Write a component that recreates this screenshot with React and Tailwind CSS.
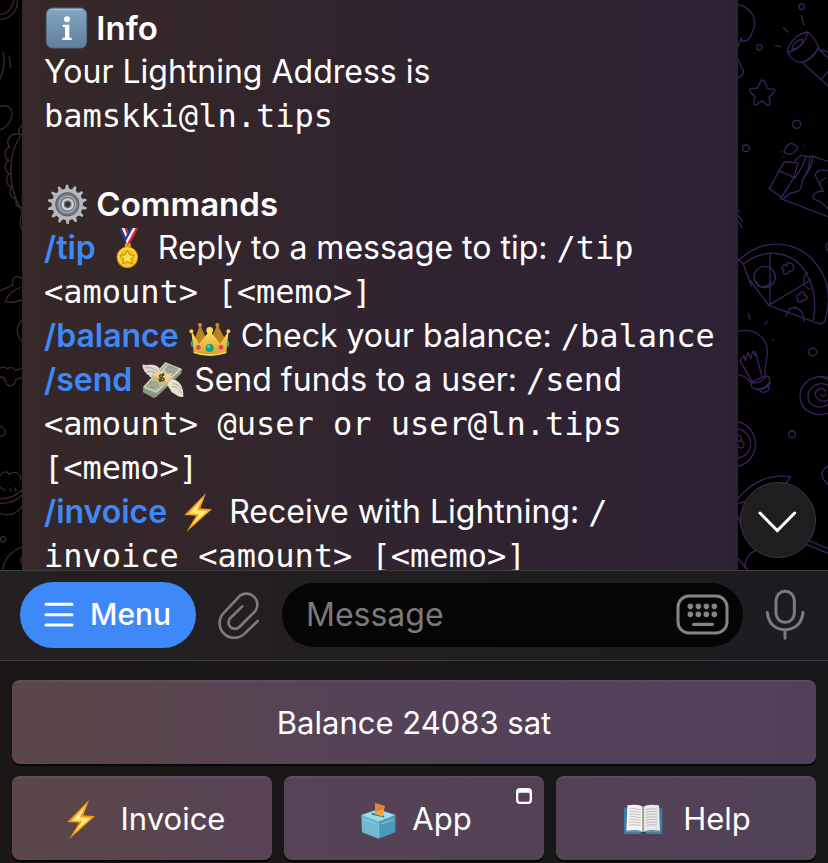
import React from 'react';

function Emoji({ label, children }) {
  return (
    <svg role="img" aria-label={label} viewBox="0 0 132 132" className="inline-block size-11 shrink-0 align-top">
      {children}
    </svg>
  );
}

function InfoEmoji() {
  return (
    <Emoji label="info">
      <defs>
        <linearGradient id="infoFill" x1="0" y1="0" x2="0" y2="1">
          <stop offset="0" stopColor="#84a7c3" />
          <stop offset="1" stopColor="#5f7f9d" />
        </linearGradient>
      </defs>
      <rect x="7" y="6" width="121" height="120" rx="19" fill="url(#infoFill)" stroke="#52708d" strokeWidth="3" />
      <path d="M24 11h88" stroke="#a9c6dc" strokeWidth="3" strokeLinecap="round" />
      <circle cx="69" cy="40" r="9" fill="#fff" />
      <path d="M56 56h20v39h7v7H55v-7h8V63h-7z" fill="#fff" />
    </Emoji>
  );
}

function GearEmoji() {
  const teeth = Array.from({ length: 14 }, (_, i) => (i * 360) / 14);
  return (
    <Emoji label="gear">
      {teeth.map((a) => (
        <path key={a} d="M63 22l3-14h6l4 14z" transform={`rotate(${a} 70 67)`} fill="#b6babf" />
      ))}
      <circle cx="70" cy="67" r="47" fill="#b4b8bd" />
      <circle cx="70" cy="67" r="35" fill="#737980" stroke="#53585e" strokeWidth="3" />
      <circle cx="70" cy="67" r="25" fill="none" stroke="#a6abb1" strokeWidth="4" />
      <circle cx="71" cy="67" r="15" fill="#5a6066" stroke="#cfd3d7" strokeWidth="7" />
      <circle cx="71" cy="67" r="7" fill="#33302f" />
    </Emoji>
  );
}

function MedalEmoji() {
  return (
    <Emoji label="medal">
      <path d="M42 6h14l18 44-8 12z" fill="#233a8f" />
      <path d="M50 6h12l14 36-4 14z" fill="#f3f4f8" />
      <path d="M58 6h8l12 32-3 9z" fill="#d8262f" />
      <path d="M100 6H86L62 52l8 10z" fill="#d8262f" />
      <path d="M92 6H80L62 42l4 12z" fill="#f3f4f8" />
      <path d="M84 6h-9L62 34l1 10z" fill="#233a8f" />
      <path d="M61 52h15l3 12H58z" fill="#d99b16" />
      <circle cx="67" cy="94" r="32" fill="#d89c12" />
      <circle cx="67" cy="93" r="29" fill="#fbd838" />
      <circle cx="67" cy="94" r="23" fill="#efbd20" />
      <path d="M67 73l7 14 15 1-11 11 4 15-15-8-14 8 3-15-11-11 15-1z" fill="#fbe04c" stroke="#c78a0c" strokeWidth="3" />
    </Emoji>
  );
}

function CrownEmoji() {
  return (
    <Emoji label="crown">
      <defs>
        <linearGradient id="crownFill" x1="0" y1="0" x2="0" y2="1">
          <stop offset="0" stopColor="#ffe066" />
          <stop offset="1" stopColor="#dc9c1d" />
        </linearGradient>
      </defs>
      <path d="M20 76L36 32l20 44 10 6 22-50 24 44v22H20z" fill="#b98320" />
      <circle cx="36" cy="33" r="6" fill="#c8952c" />
      <circle cx="88" cy="33" r="6" fill="#c8952c" />
      <path d="M10 50l23 39 32-39 32 39 25-39-7 67q-50 17-98 0z" fill="url(#crownFill)" />
      <circle cx="10" cy="52" r="6" fill="#f7cf52" />
      <circle cx="65" cy="49" r="10" fill="#ffd75a" />
      <circle cx="121" cy="52" r="6" fill="#f7cf52" />
      <path d="M17 115q48 16 98 0" fill="none" stroke="#f9d968" strokeWidth="4" />
      <ellipse cx="12" cy="89" rx="4" ry="9" fill="#22a88b" />
      <ellipse cx="120" cy="89" rx="4" ry="9" fill="#22a88b" />
      <circle cx="31" cy="100" r="7" fill="#d93d8f" />
      <circle cx="65" cy="102" r="12" fill="#1b9f83" />
      <circle cx="99" cy="100" r="7" fill="#d93d8f" />
      <circle cx="62" cy="98" r="4" fill="#6fdcc2" />
    </Emoji>
  );
}

function MoneyEmoji() {
  return (
    <Emoji label="money with wings">
      <path d="M5 19c10 6 26-3 42 5 12 6 16 18 12 26-8 12-20 14-29 8-4 0-6-4-6-7-5 0-8-3-8-7-5-1-7-5-7-8-4-4-5-10-4-17z" fill="#ddd9d0" />
      <path d="M12 29q20-4 36 10M18 40q14-2 27 6" fill="none" stroke="#a9a399" strokeWidth="3" />
      <path d="M73 13l50 20-3 14-74 70-8 3-33-18 2-12z" fill="#8e9784" />
      <path d="M73 13l50 20-76 72L5 88z" fill="#c9cfba" />
      <path d="M75 20l36 14-66 62-29-11z" fill="none" stroke="#87917b" strokeWidth="3" />
      <ellipse cx="88" cy="35" rx="14" ry="9" fill="#a2ac95" stroke="#758169" strokeWidth="2" />
      <ellipse cx="39" cy="80" rx="14" ry="9" fill="#a2ac95" stroke="#758169" strokeWidth="2" />
      <path d="M51 36l43 19v16L79 85 35 66V51z" fill="#d8b570" />
      <path d="M51 36l43 19-15 16-44-20z" fill="#efd296" />
      <path d="M70 52c-8-5-18 0-13 5s15 2 12 8-13 3-16-3M68 45L56 72" fill="none" stroke="#3d3523" strokeWidth="4" />
      <path d="M127 117c-12 1-20-4-26-10-8-1-12-8-14-14-7-6-8-18-2-25 10-7 21-3 28 5 10 8 15 25 14 44z" fill="#e5e1d8" />
      <path d="M93 85q17 0 29 22M96 77q17 1 27 18" fill="none" stroke="#aaa499" strokeWidth="3" />
    </Emoji>
  );
}

function BoltEmoji() {
  return (
    <Emoji label="high voltage">
      <path d="M90 9L25 75l35 2-29 49 77-68-35-3z" fill="#f59a1b" />
      <path d="M82 22L38 71l31 2-23 35 50-46-33-2z" fill="#ffe45c" />
      <path d="M72 38L50 66l27 1-16 22 24-23-27-1z" fill="#fff7b8" />
    </Emoji>
  );
}

function BallotEmoji() {
  return (
    <Emoji label="ballot box">
      <path d="M16 54l52 20v51L18 106z" fill="#6fb9d3" />
      <path d="M119 54L68 74v51l50-19z" fill="#4a99b8" />
      <path d="M16 54l50-17 53 17-51 20z" fill="#9bdcec" />
      <path d="M24 67l36 14M112 67L76 81M68 78v42" fill="none" stroke="#8dd0e4" strokeWidth="3" />
      <path d="M47 50l38 9" stroke="#2e6c86" strokeWidth="5" />
      <path d="M58 19l28 8-5 32-25-8z" fill="#f0a24a" />
      <path d="M58 19l28 8-2 9-27 8z" fill="#dc8630" />
    </Emoji>
  );
}

function BookEmoji() {
  const rows = [38, 46, 54, 62, 70, 78, 86];
  return (
    <Emoji label="open book">
      <path d="M9 32h115v79H75q-9 5-17 0H9z" fill="#3c7ca6" />
      <path d="M17 101h43l7 5 6-5h43v5H74l-7 4-7-4H17z" fill="#8b8a88" />
      <path d="M19 25q34-5 47 5v74q-14-8-50-3z" fill="#f4f3f1" />
      <path d="M114 25q-34-5-47 5v74q14-8 50-3z" fill="#e9e8e6" />
      <path d="M66 29v74" stroke="#8d8b89" strokeWidth="4" />
      {rows.map((y) => (
        <path key={y} d={`M25 ${y - 2}q17-3 34 2M75 ${y}q17-5 33-2`} fill="none" stroke="#a5a2ae" strokeWidth="2" />
      ))}
      <path d="M60 108h14" stroke="#264c35" strokeWidth="6" />
    </Emoji>
  );
}

function DoodlesLeft() {
  return (
    <svg
      aria-hidden="true"
      viewBox="0 0 66 1710"
      className="absolute top-0 left-0 h-[570px] w-[22px]"
      fill="none"
      stroke="#3d2926"
      strokeWidth="4"
      strokeLinecap="round"
    >
      <path d="M52 0C55 30 32 58 0 58M42 0C38 22 22 42 0 44" />
      <path d="M9 158q10 38-9 78M27 168l5 34" />
      <path d="M0 320c28-10 42 10 34 34-6 18-18 30-34 36" />
      <path d="M66 402c-44 58-46 154 0 232M66 378q-14 8-7 25c-30-6-44 20-30 38-18 6-18 32-3 40-16 10-12 34 2 40-14 12-8 36 6 40-8 18 0 34 14 36-2 20 6 26 18 24M66 640q-10 28 0 50" />
      <path d="M66 836c-18-14-32-2-28 20L0 872M62 862c-20 6-42 26-44 42 12 6 30 2 48-4" />
      <path d="M66 960q-28 30 0 66" />
      <path d="M0 1104q14-6 20 2 18-8 26 4l20-4M0 1132q10-4 16 10c4 22 28 20 32-4l18-5" />
      <path d="M0 1278c12 6 20 18 14 24q-6 8-14 6" />
      <path d="M0 1428c8-16 22-16 28-4 12-14 36-4 34 14M0 1462l6 4M12 1466l2 6M30 1466l2 8M46 1464l2 10M0 1496q40 0 66-26M0 1510q38 2 66-24M0 1540q40 14 66-20" />
      <circle cx="9" cy="1618" r="8" />
      <path d="M8 1710c4-32 26-60 58-68M66 1672q-8 8 0 20" />
    </svg>
  );
}

function DoodlesRight() {
  return (
    <svg
      aria-hidden="true"
      viewBox="0 0 270 1710"
      className="absolute top-0 right-0 h-[570px] w-[90px]"
      fill="none"
      stroke="#37235a"
      strokeWidth="4"
      strokeLinecap="round"
      strokeLinejoin="round"
    >
      {/* balloon and star */}
      <path d="M0 14c32 6 52 30 50 62-2 14-10 22-12 34q-8 14-26 14l-2-10-10 24M0 178l17 38q-5 14-17 16" />
      <path d="M73 240q6 0 8 8l8 18 20 2q4 6-2 10l-14 14 4 20q-4 6-10 2l-16-12-16 12q-8 2-8-6l4-18-14-14q-4-8 4-10l18-2 8-18q2-6 6-6z" />
      {/* flashlight */}
      <path d="M190 47l8 28M136 84l14 12M112 137l16 3" />
      <path d="M148 156c4-28 28-54 60-60 18 12 28 30 34 46-12 28-28 42-54 46-18-4-32-16-40-32zM148 156c30-4 56-26 60-60M162 148c2-16 16-30 32-30 2 14-14 30-32 30M242 142q-24 40-54 46M194 188l76 70M242 146l28 28M244 152q12-4 26 6M270 214l-20 24" />
      <circle cx="191" cy="20" r="8" />
      <circle cx="64" cy="142" r="8" />
      <circle cx="176" cy="373" r="12" />
      <circle cx="24" cy="445" r="10" />
      {/* candy bar */}
      <path d="M138 454q4-18 20-24 14 2 22 12-8 18-22 20-16 2-20-8zM128 455h1M198 436h2M136 470h1" />
      <path d="M94 566l44-80 42 2M94 566l34 24M122 512l46 20M170 482l20-16 24 4 8-2 48 16M180 488l-12 44-40 64 142 54M214 470c4 34-10 52-18 64-8 12-2 24-12 38-14 6-30 4-46 22M222 470c4 30-16 50-26 66M204 470l-10 26-24 40M270 512c-16-6-34 0-38 12 2 12 8 14 10 24l14 26c-18-2-32 6-30 22 10 8 20 4 28 16l16 14M262 534q-10 4-16 14" />
      <path d="M0 630l4 6M0 646l14 18M0 664l12 18" />
      {/* pizza slice */}
      <path d="M0 784c76-82 214-68 262 56 14 40 10 84-2 124q-6 10-20 6L92 916 34 838M16 792c74-56 162-36 196 42 22 44 20 92 14 126M0 776l16 16 24 66M96 760v154M92 916l126-76M34 838l58 78" />
      <circle cx="80" cy="831" r="32" />
      <path d="M148 798c-12-10-22 8-10 12-8 14 12 18 14 4 20 4 18-26 4-24-6-4-12 0-8 8zM208 818c-18 18-14 44 10 50M56 846q4 16 16 14 20 0 28-16M144 950c4-36 52-40 54 14M186 884c-4-12 18-10 14 2 14 2 6 20-6 14-4 12-20 6-14-4-8-4-4-14 6-12z" />
      <path d="M270 728q-12 10 0 24M31 940l5 18M88 964l-8 10M104 1020l3-1" />
      {/* light bulb */}
      <path d="M0 994c50-12 88 20 88 62 0 30-10 40-6 72L38 1148Q26 1128 0 1124M6 1082l38 66M52 1054l20 76M6 1082l12-16 4 16 8-24 8 18 6-22 8 12M38 1148c20 4 40-6 46-20q14 0 10 20-20 26-44 18M40 1150q-2 14 12 16M54 1168c20 4 40-8 42-20M64 1170q10 14 28 0v-12" />
      <circle cx="224" cy="1056" r="12" />
      {/* swirls */}
      <path d="M270 1132c-46-10-84 18-84 56 0 46 46 64 84 52M270 1140q-18-14-38-8M270 1156c-26-14-60 4-60 32 0 30 34 42 60 26M270 1200c-18 8-36 0-38-18 2-18 26-22 32-6M248 1184q10 10 16-2" />
      <path d="M0 1266c28 4 52 32 52 66 0 36-24 62-52 66M0 1286c24 6 38 24 38 46 0 20-16 38-38 42M0 1306q12 2 10 12-2 6-10 6M2 1324c16-8 22 18 8 20q-8 0-10-8" />
      <circle cx="162" cy="1303" r="10" />
      <path d="M270 1398q-36 20 0 56" />
      {/* umbrella */}
      <path d="M0 1496c44-54 96-74 158-66l-16 22M0 1510q14 0 20-6M0 1548l20 60 50 0M20 1704c0-26 14-46 34-52M0 1676l30 34M214 1622l56 24M206 1634l64 26" />
    </svg>
  );
}

function Cmd({ children }) {
  return (
    <a href="#" className="font-semibold text-[#3f88f7]">
      {children}
    </a>
  );
}

function Code({ children }) {
  return <code className="font-['DejaVu_Sans_Mono',monospace] text-[32px] leading-none">{children}</code>;
}

function KeyButton({ className = '', children }) {
  return (
    <button
      type="button"
      className={`relative flex h-[84px] items-center justify-center rounded-lg border-t-2 border-white/5 text-[31px] text-white shadow-[0_2px_0_#050306] ${className}`}
    >
      {children}
    </button>
  );
}

export default function App() {
  return (
    <div className="flex h-screen flex-col overflow-hidden bg-black font-[Inter,sans-serif] text-white">
      <main className="relative min-h-0 flex-1 overflow-hidden">
        <DoodlesLeft />
        <DoodlesRight />
        <article className="mr-[90px] ml-[22px] min-h-full bg-linear-to-r from-[#362827] via-[#31242f] to-[#2d2135] pt-[6px] pl-[22px] text-[32px] leading-[44px] whitespace-nowrap">
          <h2 className="text-[33px] font-semibold">
            <InfoEmoji /> Info
          </h2>
          <p className="mb-11">
            Your Lightning Address is
            <br />
            <Code>bamskki@ln.tips</Code>
          </p>
          <h2 className="text-[33px] font-semibold">
            <GearEmoji /> Commands
          </h2>
          <p>
            <Cmd>/tip</Cmd> <MedalEmoji /> Reply to a message to tip: <Code>/tip</Code>
            <br />
            <Code>&lt;amount&gt; [&lt;memo&gt;]</Code>
          </p>
          <p>
            <Cmd>/balance</Cmd> <CrownEmoji /> Check your balance: <Code>/balance</Code>
          </p>
          <p>
            <Cmd>/send</Cmd> <MoneyEmoji /> Send funds to a user: <Code>/send</Code>
            <br />
            <Code>&lt;amount&gt; @user or user@ln.tips</Code>
            <br />
            <Code>[&lt;memo&gt;]</Code>
          </p>
          <p>
            <Cmd>/invoice</Cmd> <BoltEmoji /> Receive with Lightning: <Code>/</Code>
            <br />
            <Code>invoice &lt;amount&gt; [&lt;memo&gt;]</Code>
          </p>
        </article>
        <button
          type="button"
          aria-label="Scroll to bottom"
          className="absolute right-3 bottom-3 flex size-[76px] items-center justify-center rounded-full border border-[#3b393a] bg-[#201d20]"
        >
          <svg viewBox="0 0 120 66" className="mt-1 h-[22px] w-10" fill="none" stroke="#fff" strokeWidth="9" strokeLinecap="round">
            <path d="M6 6l52 53 52-53" />
          </svg>
        </button>
      </main>

      <div className="flex h-[91px] shrink-0 items-center gap-[22px] border-y border-[#3e3c3e] bg-linear-to-r from-[#242022] to-[#1e1b20] pr-[23px] pb-[2px] pl-5">
        <button type="button" className="flex h-[66px] w-44 items-center gap-4 rounded-full bg-[#3e88f7] pl-6 text-[30px] font-medium">
          <svg viewBox="0 0 90 78" className="h-[26px] w-[30px]" stroke="#fff" strokeWidth="9" strokeLinecap="round">
            <path d="M6 7h78M6 38h78M6 69h78" />
          </svg>
          Menu
        </button>
        <button type="button" aria-label="Attach" className="shrink-0">
          <svg viewBox="0 0 126 144" className="h-12 w-[42px]" fill="none" stroke="#7d7b7d" strokeWidth="8" strokeLinecap="round">
            <path d="M119 90L80 128A43 43 0 0 1 18 65L66 14A33 33 0 0 1 112 60L64 108A18 18 0 0 1 37 81L73 46" />
          </svg>
        </button>
        <div className="flex h-16 min-w-0 flex-1 items-center rounded-full bg-[#050505] pr-[14px] pl-6">
          <input
            type="text"
            aria-label="Message"
            placeholder="Message"
            className="min-w-0 flex-1 bg-transparent text-[32px] outline-none placeholder:text-[#7a7a7a]"
          />
          <button type="button" aria-label="Toggle keyboard" className="shrink-0">
            <svg viewBox="0 0 159 123" className="h-[41px] w-[53px]" fill="none" stroke="#858585" strokeLinecap="round">
              <rect x="6" y="6" width="147" height="111" rx="33" strokeWidth="9" />
              <path d="M43 37h0M67 37h0M91 37h0M115 37h0M43 61h0M67 61h0M91 61h0M115 61h0" strokeWidth="17" />
              <path d="M53 91h56" strokeWidth="10" />
            </svg>
          </button>
        </div>
        <button type="button" aria-label="Record voice message" className="shrink-0">
          <svg viewBox="0 0 120 156" className="h-[52px] w-10" fill="none" stroke="#7d7b7d" strokeWidth="9" strokeLinecap="round">
            <rect x="33" y="7" width="55" height="93" rx="27" />
            <path d="M7 70c3 34 24 52 53 52s51-18 54-52M60 122v26" />
          </svg>
        </button>
      </div>

      <div className="grid shrink-0 grid-cols-3 gap-3 bg-linear-to-r from-[#1a1716] to-[#18171a] px-3 pt-[19px] pb-[3px]">
        <KeyButton className="col-span-3 bg-linear-to-r from-[#5a4746] via-[#554258] via-45% to-[#52405b]">Balance 24083 sat</KeyButton>
        <KeyButton className="gap-[18px] bg-linear-to-r from-[#5a4746] to-[#574356]">
          <BoltEmoji />
          Invoice
        </KeyButton>
        <KeyButton className="gap-3 bg-linear-to-r from-[#574356] to-[#544156]">
          <BallotEmoji />
          App
          <svg aria-hidden="true" viewBox="0 0 48 48" className="absolute top-[10px] right-3 size-4">
            <path fill="#fff" fillRule="evenodd" d="M12 0h24q12 0 12 12v24q0 12-12 12H12Q0 48 0 36V12Q0 0 12 0zm-1 14q-4 0-4 4v18q0 5 5 5h24q5 0 5-5V18q0-4-4-4z" />
          </svg>
        </KeyButton>
        <KeyButton className="gap-[18px] bg-linear-to-r from-[#544156] to-[#514257]">
          <BookEmoji />
          Help
        </KeyButton>
      </div>
    </div>
  );
}
